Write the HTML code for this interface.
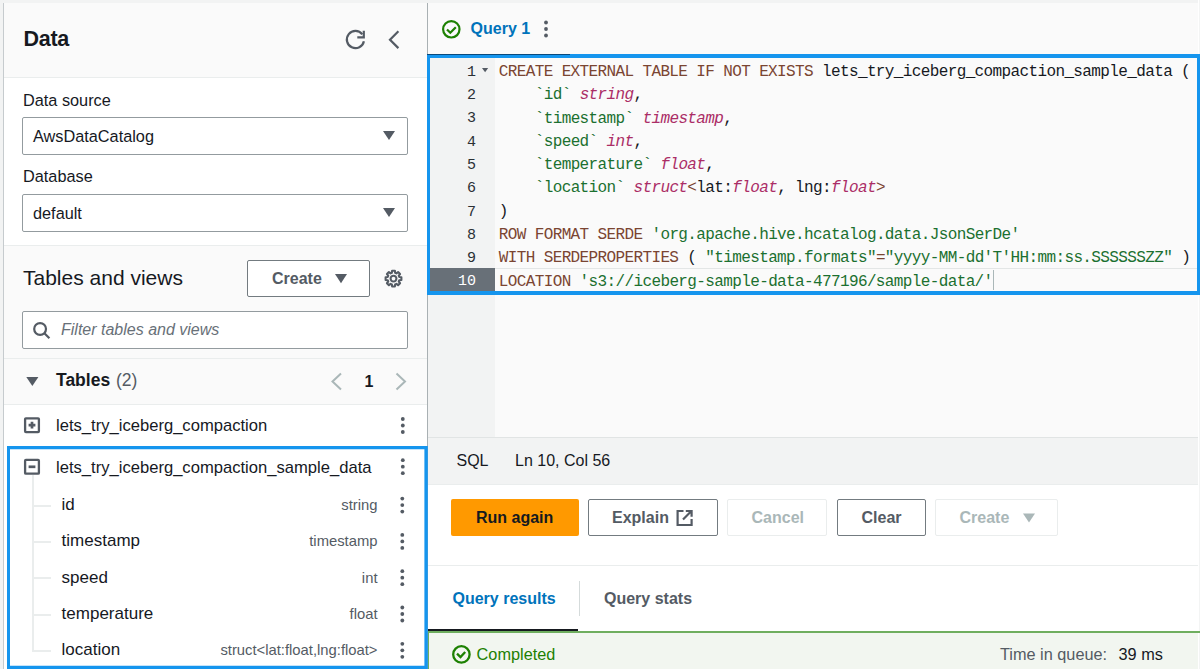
<!DOCTYPE html><html><head><meta charset="utf-8"><style>html,body{margin:0;padding:0;width:1200px;height:669px;overflow:hidden;background:#f2f3f3;position:relative;}</style></head><body><div style="position:absolute;left:3px;top:3px;width:424px;height:666px;background:#ffffff;"></div>
<div style="position:absolute;left:3px;top:3px;width:1px;height:666px;background:#c6cbce;"></div>
<div style="position:absolute;left:4px;top:3px;width:423px;height:74px;background:#fafafa;"></div>
<div style="position:absolute;left:4px;top:77px;width:423px;height:1px;background:#eaeded;"></div>
<div style="position:absolute;left:23.5px;top:28.90px;white-space:pre;font-family:'Liberation Sans', sans-serif;font-size:21.5px;line-height:21.5px;color:#16191f;font-weight:bold;letter-spacing:-0.3px;">Data</div>
<svg style="position:absolute;left:0;top:0" width="1200" height="669" viewBox="0 0 1200 669"><g fill="none" stroke="#545b64" stroke-width="2.2"><path d="M362.3 34.3 A8.6 8.6 0 1 0 363.9 41.2"/><path d="M357.3 37.3 H363.8 V30.8" stroke-linejoin="miter"/><path d="M398.4 31.3 L390 39.7 L398.4 48.1"/></g></svg>
<div style="position:absolute;left:23px;top:91.80px;white-space:pre;font-family:'Liberation Sans', sans-serif;font-size:16.3px;line-height:16.3px;color:#16191f;font-weight:normal;">Data source</div>
<div style="position:absolute;left:22px;top:117px;width:386px;height:38px;box-sizing:border-box;border:1px solid #939b9f;border-radius:2px;background:#fff;"></div>
<div style="position:absolute;left:33px;top:127.80px;white-space:pre;font-family:'Liberation Sans', sans-serif;font-size:16.3px;line-height:16.3px;color:#16191f;font-weight:normal;">AwsDataCatalog</div>
<div style="position:absolute;left:23px;top:167.80px;white-space:pre;font-family:'Liberation Sans', sans-serif;font-size:16.3px;line-height:16.3px;color:#16191f;font-weight:normal;">Database</div>
<div style="position:absolute;left:22px;top:194px;width:386px;height:38px;box-sizing:border-box;border:1px solid #939b9f;border-radius:2px;background:#fff;"></div>
<div style="position:absolute;left:33px;top:204.80px;white-space:pre;font-family:'Liberation Sans', sans-serif;font-size:16.3px;line-height:16.3px;color:#16191f;font-weight:normal;">default</div>
<svg style="position:absolute;left:0;top:0" width="1200" height="669" viewBox="0 0 1200 669"><g fill="#545b64"><path d="M383 131 H395 L389 140 Z"/><path d="M383 208 H395 L389 217 Z"/></g></svg>
<div style="position:absolute;left:4px;top:245px;width:423px;height:1px;background:#eaeded;"></div>
<div style="position:absolute;left:4px;top:246px;width:423px;height:112px;background:#fafafa;"></div>
<div style="position:absolute;left:23px;top:267.42px;white-space:pre;font-family:'Liberation Sans', sans-serif;font-size:21px;line-height:21px;color:#16191f;font-weight:normal;">Tables and views</div>
<div style="position:absolute;left:247px;top:260px;width:123px;height:37px;box-sizing:border-box;border:1px solid #737b80;border-radius:2px;background:#fff;"></div>
<div style="position:absolute;left:272px;top:271.06px;white-space:pre;font-family:'Liberation Sans', sans-serif;font-size:16px;line-height:16px;color:#545b64;font-weight:bold;">Create</div>
<svg style="position:absolute;left:0;top:0" width="1200" height="669" viewBox="0 0 1200 669"><path d="M335 274 H347 L341 283.3 Z" fill="#545b64"/></svg>
<svg style="position:absolute;left:0;top:0" width="1200" height="669" viewBox="0 0 1200 669"><g transform="translate(393.5 278.6)" fill="none" stroke="#545b64" stroke-width="2.1"><circle r="2.9"/><path d="M-1.65 -5.77 L-1.39 -7.88 L1.39 -7.88 L1.65 -5.77 L2.91 -5.25 L4.59 -6.55 L6.55 -4.59 L5.25 -2.91 L5.77 -1.65 L7.88 -1.39 L7.88 1.39 L5.77 1.65 L5.25 2.91 L6.55 4.59 L4.59 6.55 L2.91 5.25 L1.65 5.77 L1.39 7.88 L-1.39 7.88 L-1.65 5.77 L-2.91 5.25 L-4.59 6.55 L-6.55 4.59 L-5.25 2.91 L-5.77 1.65 L-7.88 1.39 L-7.88 -1.39 L-5.77 -1.65 L-5.25 -2.91 L-6.55 -4.59 L-4.59 -6.55 L-2.91 -5.25 Z" stroke-linejoin="round"/></g></svg>
<div style="position:absolute;left:22px;top:311px;width:386px;height:38px;box-sizing:border-box;border:1px solid #939b9f;border-radius:2px;background:#fff;"></div>
<svg style="position:absolute;left:0;top:0" width="1200" height="669" viewBox="0 0 1200 669"><g fill="none" stroke="#545b64" stroke-width="2.2"><circle cx="40.1" cy="329" r="5.9"/><path d="M44.4 333.3 L49.4 338.3"/></g></svg>
<div style="position:absolute;left:61px;top:322.46px;white-space:pre;font-family:'Liberation Sans', sans-serif;font-size:16px;line-height:16px;color:#687078;font-weight:normal;font-style:italic;">Filter tables and views</div>
<div style="position:absolute;left:4px;top:358px;width:423px;height:1px;background:#eaeded;"></div>
<div style="position:absolute;left:4px;top:359px;width:423px;height:45px;background:#fafafa;"></div>
<svg style="position:absolute;left:0;top:0" width="1200" height="669" viewBox="0 0 1200 669"><path d="M26.3 377 H38.4 L32.35 386 Z" fill="#545b64"/></svg>
<div style="position:absolute;left:56px;top:371.99px;white-space:pre;font-family:'Liberation Sans', sans-serif;font-size:17.5px;line-height:17.5px;color:#16191f;font-weight:bold;">Tables</div>
<div style="position:absolute;left:116px;top:371.99px;white-space:pre;font-family:'Liberation Sans', sans-serif;font-size:17.5px;line-height:17.5px;color:#545b64;font-weight:normal;">(2)</div>
<svg style="position:absolute;left:0;top:0" width="1200" height="669" viewBox="0 0 1200 669"><g fill="none" stroke="#aab7b8" stroke-width="2"><path d="M341 373.5 L332.5 381.5 L341 389.5"/><path d="M396.5 373.5 L405 381.5 L396.5 389.5"/></g></svg>
<div style="position:absolute;left:364.5px;top:373.66px;white-space:pre;font-family:'Liberation Sans', sans-serif;font-size:16px;line-height:16px;color:#16191f;font-weight:bold;">1</div>
<div style="position:absolute;left:4px;top:404px;width:423px;height:1px;background:#eaeded;"></div>
<svg style="position:absolute;left:0;top:0" width="1200" height="669" viewBox="0 0 1200 669"><g fill="none" stroke="#545b64" stroke-width="2.3"><rect x="25.1" y="418.3" width="13.8" height="13.8" rx="0.8"/><path d="M28.6 425.2 H35.4 M32 421.8 V428.6" stroke-width="2.7"/></g></svg>
<div style="position:absolute;left:56px;top:417.55px;white-space:pre;font-family:'Liberation Sans', sans-serif;font-size:16.6px;line-height:16.6px;color:#16191f;font-weight:normal;">lets_try_iceberg_compaction</div>
<svg style="position:absolute;left:0;top:0" width="1200" height="669" viewBox="0 0 1200 669"><g fill="#545b64"><circle cx="402.8" cy="419.0" r="1.9"/><circle cx="402.8" cy="425.5" r="1.9"/><circle cx="402.8" cy="432.0" r="1.9"/></g></svg>
<svg style="position:absolute;left:0;top:0" width="1200" height="669" viewBox="0 0 1200 669"><g fill="none" stroke="#545b64" stroke-width="2.3"><rect x="25.1" y="459.9" width="13.8" height="13.8" rx="0.8"/><path d="M28.6 466.8 H35.4" stroke-width="2.7"/></g></svg>
<div style="position:absolute;left:56px;top:459.55px;white-space:pre;font-family:'Liberation Sans', sans-serif;font-size:16.6px;line-height:16.6px;color:#16191f;font-weight:normal;">lets_try_iceberg_compaction_sample_data</div>
<svg style="position:absolute;left:0;top:0" width="1200" height="669" viewBox="0 0 1200 669"><g fill="#545b64"><circle cx="402.8" cy="460.2" r="1.9"/><circle cx="402.8" cy="466.7" r="1.9"/><circle cx="402.8" cy="473.2" r="1.9"/></g></svg>
<div style="position:absolute;left:32px;top:475px;width:2px;height:176.8px;background:#eaeded;"></div>
<div style="position:absolute;left:33px;top:504.59999999999997px;width:18px;height:2px;background:#eaeded;"></div>
<div style="position:absolute;left:61.6px;top:496.11px;white-space:pre;font-family:'Liberation Sans', sans-serif;font-size:17px;line-height:17px;color:#16191f;font-weight:normal;">id</div>
<div style="position:absolute;right:822.5px;top:497.97px;white-space:pre;font-family:'Liberation Sans', sans-serif;font-size:14.8px;line-height:14.8px;color:#545b64;font-weight:normal;">string</div>
<svg style="position:absolute;left:0;top:0" width="1200" height="669" viewBox="0 0 1200 669"><g fill="#545b64"><circle cx="402.3" cy="498.59999999999997" r="1.9"/><circle cx="402.3" cy="505.09999999999997" r="1.9"/><circle cx="402.3" cy="511.59999999999997" r="1.9"/></g></svg>
<div style="position:absolute;left:33px;top:540.9px;width:18px;height:2px;background:#eaeded;"></div>
<div style="position:absolute;left:61.6px;top:532.41px;white-space:pre;font-family:'Liberation Sans', sans-serif;font-size:17px;line-height:17px;color:#16191f;font-weight:normal;">timestamp</div>
<div style="position:absolute;right:822.5px;top:534.27px;white-space:pre;font-family:'Liberation Sans', sans-serif;font-size:14.8px;line-height:14.8px;color:#545b64;font-weight:normal;">timestamp</div>
<svg style="position:absolute;left:0;top:0" width="1200" height="669" viewBox="0 0 1200 669"><g fill="#545b64"><circle cx="402.3" cy="534.9" r="1.9"/><circle cx="402.3" cy="541.4" r="1.9"/><circle cx="402.3" cy="547.9" r="1.9"/></g></svg>
<div style="position:absolute;left:33px;top:577.2px;width:18px;height:2px;background:#eaeded;"></div>
<div style="position:absolute;left:61.6px;top:568.71px;white-space:pre;font-family:'Liberation Sans', sans-serif;font-size:17px;line-height:17px;color:#16191f;font-weight:normal;">speed</div>
<div style="position:absolute;right:822.5px;top:570.57px;white-space:pre;font-family:'Liberation Sans', sans-serif;font-size:14.8px;line-height:14.8px;color:#545b64;font-weight:normal;">int</div>
<svg style="position:absolute;left:0;top:0" width="1200" height="669" viewBox="0 0 1200 669"><g fill="#545b64"><circle cx="402.3" cy="571.2" r="1.9"/><circle cx="402.3" cy="577.7" r="1.9"/><circle cx="402.3" cy="584.2" r="1.9"/></g></svg>
<div style="position:absolute;left:33px;top:613.5px;width:18px;height:2px;background:#eaeded;"></div>
<div style="position:absolute;left:61.6px;top:605.01px;white-space:pre;font-family:'Liberation Sans', sans-serif;font-size:17px;line-height:17px;color:#16191f;font-weight:normal;">temperature</div>
<div style="position:absolute;right:822.5px;top:606.87px;white-space:pre;font-family:'Liberation Sans', sans-serif;font-size:14.8px;line-height:14.8px;color:#545b64;font-weight:normal;">float</div>
<svg style="position:absolute;left:0;top:0" width="1200" height="669" viewBox="0 0 1200 669"><g fill="#545b64"><circle cx="402.3" cy="607.5" r="1.9"/><circle cx="402.3" cy="614.0" r="1.9"/><circle cx="402.3" cy="620.5" r="1.9"/></g></svg>
<div style="position:absolute;left:33px;top:649.8px;width:18px;height:2px;background:#eaeded;"></div>
<div style="position:absolute;left:61.6px;top:641.31px;white-space:pre;font-family:'Liberation Sans', sans-serif;font-size:17px;line-height:17px;color:#16191f;font-weight:normal;">location</div>
<div style="position:absolute;right:822.5px;top:643.17px;white-space:pre;font-family:'Liberation Sans', sans-serif;font-size:14.8px;line-height:14.8px;color:#545b64;font-weight:normal;">struct&lt;lat:float,lng:float&gt;</div>
<svg style="position:absolute;left:0;top:0" width="1200" height="669" viewBox="0 0 1200 669"><g fill="#545b64"><circle cx="402.3" cy="643.8" r="1.9"/><circle cx="402.3" cy="650.3" r="1.9"/><circle cx="402.3" cy="656.8" r="1.9"/></g></svg>
<div style="position:absolute;left:427px;top:3px;width:1px;height:666px;background:#a9b0b3;"></div>
<svg style="position:absolute;left:0;top:0" width="1200" height="669" viewBox="0 0 1200 669"><path fill="#1595ee" fill-rule="evenodd" d="M7 446 H427.8 V669 H7 Z M10 449.2 H424.4 V665.8 H10 Z"/></svg>
<div style="position:absolute;left:428px;top:3px;width:772px;height:51px;background:#fafafa;"></div>
<svg style="position:absolute;left:0;top:0" width="1200" height="669" viewBox="0 0 1200 669"><g fill="none" stroke="#1d8102" stroke-width="2.2"><circle cx="451.3" cy="29.3" r="8.2"/><path d="M447 29.5 L450.3 32.8 L455.8 27.3"/></g></svg>
<div style="position:absolute;left:470.6px;top:21.06px;white-space:pre;font-family:'Liberation Sans', sans-serif;font-size:16px;line-height:16px;color:#0073bb;font-weight:bold;">Query 1</div>
<svg style="position:absolute;left:0;top:0" width="1200" height="669" viewBox="0 0 1200 669"><g fill="#545b64"><circle cx="546" cy="22.5" r="1.9"/><circle cx="546" cy="29" r="1.9"/><circle cx="546" cy="35.5" r="1.9"/></g></svg>
<div style="position:absolute;left:428px;top:54px;width:772px;height:383px;background:#fafafa;"></div>
<div style="position:absolute;left:428px;top:54px;width:67px;height:383px;background:#f2f3f3;"></div>
<div style="position:absolute;left:430px;top:267.70000000000005px;width:65px;height:23.3px;background:#687078;"></div>
<div style="position:absolute;left:495px;top:267.70000000000005px;width:702px;height:1px;background:#e3e6e6;"></div>
<div style="position:absolute;left:498.8px;top:63.94px;white-space:pre;font-family:'Liberation Mono', monospace;font-size:16px;line-height:16px;color:#16191f;font-weight:normal;letter-spacing:-0.624px;"><span style="color:#7a4532">CREATE EXTERNAL TABLE IF NOT EXISTS</span><span style="color:#16191f"> lets_try_iceberg_compaction_sample_data (</span></div>
<div style="position:absolute;right:724px;top:64.70px;white-space:pre;font-family:'Liberation Mono', monospace;font-size:15px;line-height:15px;color:#2b3035;font-weight:normal;">1</div>
<div style="position:absolute;left:498.8px;top:87.24px;white-space:pre;font-family:'Liberation Mono', monospace;font-size:16px;line-height:16px;color:#16191f;font-weight:normal;letter-spacing:-0.624px;"><span style="color:#16191f">    </span><span style="color:#1b7030">`id`</span><span style="color:#16191f"> </span><span style="color:#ab2d66;font-style:italic">string</span><span style="color:#16191f">,</span></div>
<div style="position:absolute;right:724px;top:88.00px;white-space:pre;font-family:'Liberation Mono', monospace;font-size:15px;line-height:15px;color:#2b3035;font-weight:normal;">2</div>
<div style="position:absolute;left:498.8px;top:110.54px;white-space:pre;font-family:'Liberation Mono', monospace;font-size:16px;line-height:16px;color:#16191f;font-weight:normal;letter-spacing:-0.624px;"><span style="color:#16191f">    </span><span style="color:#1b7030">`timestamp`</span><span style="color:#16191f"> </span><span style="color:#ab2d66;font-style:italic">timestamp</span><span style="color:#16191f">,</span></div>
<div style="position:absolute;right:724px;top:111.30px;white-space:pre;font-family:'Liberation Mono', monospace;font-size:15px;line-height:15px;color:#2b3035;font-weight:normal;">3</div>
<div style="position:absolute;left:498.8px;top:133.84px;white-space:pre;font-family:'Liberation Mono', monospace;font-size:16px;line-height:16px;color:#16191f;font-weight:normal;letter-spacing:-0.624px;"><span style="color:#16191f">    </span><span style="color:#1b7030">`speed`</span><span style="color:#16191f"> </span><span style="color:#ab2d66;font-style:italic">int</span><span style="color:#16191f">,</span></div>
<div style="position:absolute;right:724px;top:134.60px;white-space:pre;font-family:'Liberation Mono', monospace;font-size:15px;line-height:15px;color:#2b3035;font-weight:normal;">4</div>
<div style="position:absolute;left:498.8px;top:157.14px;white-space:pre;font-family:'Liberation Mono', monospace;font-size:16px;line-height:16px;color:#16191f;font-weight:normal;letter-spacing:-0.624px;"><span style="color:#16191f">    </span><span style="color:#1b7030">`temperature`</span><span style="color:#16191f"> </span><span style="color:#ab2d66;font-style:italic">float</span><span style="color:#16191f">,</span></div>
<div style="position:absolute;right:724px;top:157.90px;white-space:pre;font-family:'Liberation Mono', monospace;font-size:15px;line-height:15px;color:#2b3035;font-weight:normal;">5</div>
<div style="position:absolute;left:498.8px;top:180.44px;white-space:pre;font-family:'Liberation Mono', monospace;font-size:16px;line-height:16px;color:#16191f;font-weight:normal;letter-spacing:-0.624px;"><span style="color:#16191f">    </span><span style="color:#1b7030">`location`</span><span style="color:#16191f"> </span><span style="color:#ab2d66;font-style:italic">struct</span><span style="color:#7a4532">&lt;</span><span style="color:#16191f">lat:</span><span style="color:#ab2d66;font-style:italic">float</span><span style="color:#16191f">, lng:</span><span style="color:#ab2d66;font-style:italic">float</span><span style="color:#7a4532">&gt;</span></div>
<div style="position:absolute;right:724px;top:181.20px;white-space:pre;font-family:'Liberation Mono', monospace;font-size:15px;line-height:15px;color:#2b3035;font-weight:normal;">6</div>
<div style="position:absolute;left:498.8px;top:203.74px;white-space:pre;font-family:'Liberation Mono', monospace;font-size:16px;line-height:16px;color:#16191f;font-weight:normal;letter-spacing:-0.624px;"><span style="color:#16191f">)</span></div>
<div style="position:absolute;right:724px;top:204.50px;white-space:pre;font-family:'Liberation Mono', monospace;font-size:15px;line-height:15px;color:#2b3035;font-weight:normal;">7</div>
<div style="position:absolute;left:498.8px;top:227.04px;white-space:pre;font-family:'Liberation Mono', monospace;font-size:16px;line-height:16px;color:#16191f;font-weight:normal;letter-spacing:-0.624px;"><span style="color:#7a4532">ROW FORMAT SERDE</span><span style="color:#16191f"> </span><span style="color:#1b7030">'org.apache.hive.hcatalog.data.JsonSerDe'</span></div>
<div style="position:absolute;right:724px;top:227.80px;white-space:pre;font-family:'Liberation Mono', monospace;font-size:15px;line-height:15px;color:#2b3035;font-weight:normal;">8</div>
<div style="position:absolute;left:498.8px;top:250.34px;white-space:pre;font-family:'Liberation Mono', monospace;font-size:16px;line-height:16px;color:#16191f;font-weight:normal;letter-spacing:-0.624px;"><span style="color:#7a4532">WITH SERDEPROPERTIES</span><span style="color:#16191f"> ( </span><span style="color:#1b7030">"timestamp.formats"</span><span style="color:#7a4532">=</span><span style="color:#1b7030">"yyyy-MM-dd'T'HH:mm:ss.SSSSSSZZ"</span><span style="color:#16191f"> )</span></div>
<div style="position:absolute;right:724px;top:251.10px;white-space:pre;font-family:'Liberation Mono', monospace;font-size:15px;line-height:15px;color:#2b3035;font-weight:normal;">9</div>
<div style="position:absolute;left:498.8px;top:273.64px;white-space:pre;font-family:'Liberation Mono', monospace;font-size:16px;line-height:16px;color:#16191f;font-weight:normal;letter-spacing:-0.624px;"><span style="color:#7a4532">LOCATION</span><span style="color:#16191f"> </span><span style="color:#1b7030">'s3://iceberg-sample-data-477196/sample-data/'</span></div>
<div style="position:absolute;right:724px;top:274.40px;white-space:pre;font-family:'Liberation Mono', monospace;font-size:15px;line-height:15px;color:#ffffff;font-weight:normal;">10</div>
<svg style="position:absolute;left:0;top:0" width="1200" height="669" viewBox="0 0 1200 669"><path d="M482 68 H488.2 L485.1 72.2 Z" fill="#545b64"/></svg>
<div style="position:absolute;left:993px;top:269.70000000000005px;width:1px;height:20.3px;background:#aab7b8;"></div>
<div style="position:absolute;left:570px;top:54px;width:630px;height:4px;background:#1595ee;"></div>
<div style="position:absolute;left:427px;top:55px;width:143px;height:3px;background:#1595ee;"></div>
<div style="position:absolute;left:427px;top:54px;width:143px;height:1px;background:#0a4a7c;"></div>
<div style="position:absolute;left:427px;top:58px;width:3px;height:237px;background:#1595ee;"></div>
<div style="position:absolute;left:1197px;top:58px;width:3px;height:237px;background:#1595ee;"></div>
<div style="position:absolute;left:427px;top:291px;width:773px;height:4px;background:#1595ee;"></div>
<div style="position:absolute;left:428px;top:437px;width:772px;height:1px;background:#e1e4e4;"></div>
<div style="position:absolute;left:428px;top:438px;width:772px;height:46px;background:#f2f3f3;"></div>
<div style="position:absolute;left:428px;top:484px;width:772px;height:1px;background:#eaeded;"></div>
<div style="position:absolute;left:456.5px;top:452.86px;white-space:pre;font-family:'Liberation Sans', sans-serif;font-size:16px;line-height:16px;color:#16191f;font-weight:normal;">SQL</div>
<div style="position:absolute;left:515px;top:452.86px;white-space:pre;font-family:'Liberation Sans', sans-serif;font-size:16px;line-height:16px;color:#16191f;font-weight:normal;">Ln 10, Col 56</div>
<div style="position:absolute;left:428px;top:485px;width:772px;height:80px;background:#ffffff;"></div>
<div style="position:absolute;left:451px;top:499px;width:128px;height:37px;background:#ff9900;border-radius:2px;"></div>
<div style="position:absolute;left:476px;top:510.06px;white-space:pre;font-family:'Liberation Sans', sans-serif;font-size:16px;line-height:16px;color:#16191f;font-weight:bold;">Run again</div>
<div style="position:absolute;left:588px;top:499px;width:130px;height:37px;box-sizing:border-box;border:1px solid #737b80;border-radius:2px;background:#fff;"></div>
<div style="position:absolute;left:612px;top:510.06px;white-space:pre;font-family:'Liberation Sans', sans-serif;font-size:16px;line-height:16px;color:#545b64;font-weight:bold;">Explain</div>
<svg style="position:absolute;left:0;top:0" width="1200" height="669" viewBox="0 0 1200 669"><g fill="none" stroke="#545b64" stroke-width="2.2"><path d="M683.5 511 H677.6 V525 H691.6 V519"/><path d="M683 519.5 L691.2 511.3 M685.8 511 H691.6 V516.8"/></g></svg>
<div style="position:absolute;left:727px;top:499px;width:100px;height:37px;box-sizing:border-box;border:1px solid #eaeded;border-radius:2px;background:#fff;"></div>
<div style="position:absolute;left:751.5px;top:510.06px;white-space:pre;font-family:'Liberation Sans', sans-serif;font-size:16px;line-height:16px;color:#aab7b8;font-weight:bold;">Cancel</div>
<div style="position:absolute;left:837px;top:499px;width:89px;height:37px;box-sizing:border-box;border:1px solid #737b80;border-radius:2px;background:#fff;"></div>
<div style="position:absolute;left:861.5px;top:510.06px;white-space:pre;font-family:'Liberation Sans', sans-serif;font-size:16px;line-height:16px;color:#545b64;font-weight:bold;">Clear</div>
<div style="position:absolute;left:935px;top:499px;width:123px;height:37px;box-sizing:border-box;border:1px solid #eaeded;border-radius:2px;background:#fff;"></div>
<div style="position:absolute;left:959.5px;top:510.06px;white-space:pre;font-family:'Liberation Sans', sans-serif;font-size:16px;line-height:16px;color:#aab7b8;font-weight:bold;">Create</div>
<svg style="position:absolute;left:0;top:0" width="1200" height="669" viewBox="0 0 1200 669"><path d="M1023 513.5 H1035 L1029 522.5 Z" fill="#aab7b8"/></svg>
<div style="position:absolute;left:428px;top:565px;width:772px;height:1px;background:#eaeded;"></div>
<div style="position:absolute;left:428px;top:566px;width:772px;height:103px;background:#ffffff;"></div>
<div style="position:absolute;left:452.5px;top:591.06px;white-space:pre;font-family:'Liberation Sans', sans-serif;font-size:16px;line-height:16px;color:#0073bb;font-weight:bold;">Query results</div>
<div style="position:absolute;left:578.5px;top:581px;width:1px;height:35px;background:#d5dbdb;"></div>
<div style="position:absolute;left:604px;top:591.06px;white-space:pre;font-family:'Liberation Sans', sans-serif;font-size:16px;line-height:16px;color:#545b64;font-weight:bold;">Query stats</div>
<div style="position:absolute;left:428px;top:629px;width:150px;height:2px;background:#16191f;"></div>
<div style="position:absolute;left:428px;top:631px;width:772px;height:2px;background:#6fae5f;z-index:2;"></div>
<div style="position:absolute;left:428px;top:633px;width:1px;height:36px;background:#6fae5f;"></div>
<div style="position:absolute;left:429px;top:633px;width:771px;height:36px;background:#f2f6f0;"></div>
<svg style="position:absolute;left:0;top:0" width="1200" height="669" viewBox="0 0 1200 669"><g fill="none" stroke="#1d8102" stroke-width="2.3"><circle cx="461.4" cy="654.4" r="8.2"/><path d="M457 653.6 L460.5 657 L465.2 652"/></g></svg>
<div style="position:absolute;left:476.6px;top:645.80px;white-space:pre;font-family:'Liberation Sans', sans-serif;font-size:16.3px;line-height:16.3px;color:#1d8102;font-weight:normal;">Completed</div>
<div style="position:absolute;left:1000px;top:646.30px;white-space:pre;font-family:'Liberation Sans', sans-serif;font-size:16.3px;line-height:16.3px;color:#545b64;font-weight:normal;">Time in queue:</div>
<div style="position:absolute;left:1118.5px;top:646.30px;white-space:pre;font-family:'Liberation Sans', sans-serif;font-size:16.3px;line-height:16.3px;color:#16191f;font-weight:normal;">39 ms</div>
<div style="position:absolute;left:1198px;top:0px;width:2px;height:54px;background:#ffffff;"></div>
<div style="position:absolute;left:1199px;top:0px;width:1px;height:54px;background:#f3f4f4;"></div>
<div style="position:absolute;left:1198px;top:295px;width:2px;height:374px;background:#ffffff;"></div>
<div style="position:absolute;left:1199px;top:295px;width:1px;height:374px;background:#f3f4f4;"></div></body></html>
